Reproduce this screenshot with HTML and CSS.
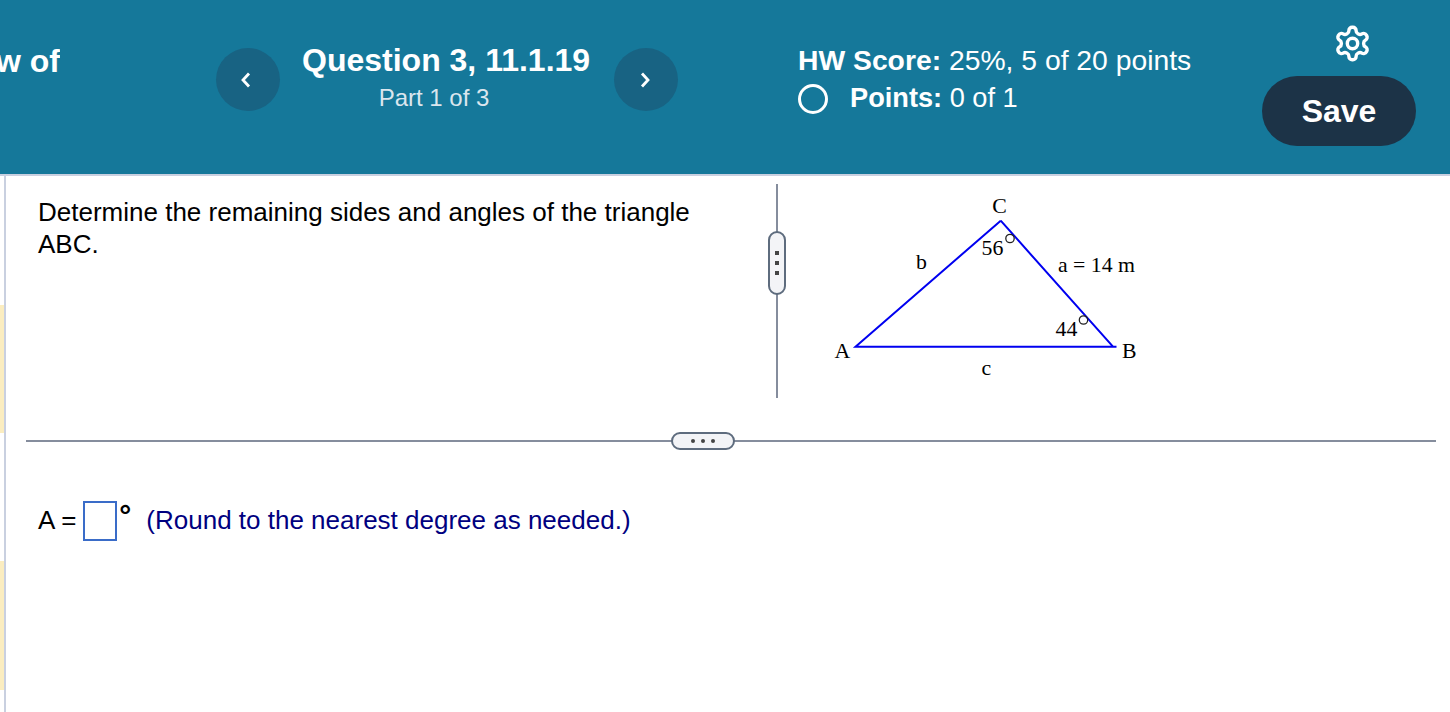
FILE: index.html
```html
<!DOCTYPE html>
<html lang="en">
<head>
<meta charset="utf-8">
<title>Question 3, 11.1.19</title>
<link rel="stylesheet" href="styles.css">
</head>
<body>
<header class="header">
  <div class="clip"><span>Review of</span></div>
  <button class="nav nav-prev" aria-label="Previous question">
    <svg width="12" height="18" viewBox="0 0 12 18"><path d="M9 2.5 L3 9 L9 15.5" class="chev"/></svg>
  </button>
  <div class="title">
    <div class="title-main">Question 3, 11.1.19</div>
    <div class="title-part">Part 1 of 3</div>
  </div>
  <button class="nav nav-next" aria-label="Next question">
    <svg width="12" height="18" viewBox="0 0 12 18"><path d="M3 2.5 L9 9 L3 15.5" class="chev"/></svg>
  </button>
  <div class="score">
    <div class="score-line"><b>HW Score:</b> 25%, 5 of 20 points</div>
    <div class="score-line points"><span class="ring"></span><span><b>Points:</b> 0 of 1</span></div>
  </div>
  <div class="actions">
    <svg class="gear" width="39" height="39" viewBox="0 0 24 24"><path d="M12.22 2h-.44a2 2 0 0 0-2 2v.18a2 2 0 0 1-1 1.73l-.43.25a2 2 0 0 1-2 0l-.15-.08a2 2 0 0 0-2.73.73l-.22.38a2 2 0 0 0 .73 2.73l.15.1a2 2 0 0 1 1 1.72v.51a2 2 0 0 1-1 1.74l-.15.09a2 2 0 0 0-.73 2.73l.22.38a2 2 0 0 0 2.73.73l.15-.08a2 2 0 0 1 2 0l.43.25a2 2 0 0 1 1 1.73V20a2 2 0 0 0 2 2h.44a2 2 0 0 0 2-2v-.18a2 2 0 0 1 1-1.73l.43-.25a2 2 0 0 1 2 0l.15.08a2 2 0 0 0 2.73-.73l.22-.39a2 2 0 0 0-.73-2.73l-.15-.08a2 2 0 0 1-1-1.74v-.5a2 2 0 0 1 1-1.74l.15-.09a2 2 0 0 0 .73-2.73l-.22-.38a2 2 0 0 0-2.73-.73l-.15.08a2 2 0 0 1-2 0l-.43-.25a2 2 0 0 1-1-1.73V4a2 2 0 0 0-2-2z"/><circle cx="12" cy="12" r="3.2"/></svg>
    <button class="save">Save</button>
  </div>
</header>
<div class="body">
  <aside class="rail">
    <div class="mark mark-a"></div>
    <div class="mark mark-b"></div>
  </aside>
  <main class="main">
    <section class="top">
      <p class="prompt">Determine the remaining sides and angles of the triangle ABC.</p>
      <div class="vsplit">
        <div class="vhandle"><i></i><i></i><i></i></div>
      </div>
      <svg class="figure" width="330" height="199" viewBox="820 186 330 199">
        <path class="tri" d="M1000.7 220.7 L855.5 346.7 H1116.5 M1000.7 220.7 L1113 346.7"/>
        <text x="999.5" y="213" text-anchor="middle">C</text>
        <text x="981.5" y="255">56</text>
        <circle class="deg" cx="1010" cy="238.5" r="4.2"/>
        <text x="916" y="269">b</text>
        <text x="1058" y="272">a = 14 m</text>
        <text x="1055.5" y="336">44</text>
        <circle class="deg" cx="1083.5" cy="320" r="4.2"/>
        <text x="834.5" y="358">A</text>
        <text x="1122" y="358">B</text>
        <text x="981.5" y="375">c</text>
      </svg>
    </section>
    <div class="hsplit"><div class="hhandle"><i></i><i></i><i></i></div></div>
    <section class="answer">
      <span class="lhs">A =</span>
      <span class="box"></span>
      <span class="degree">°</span>
      <span class="hint">(Round to the nearest degree as needed.)</span>
    </section>
  </main>
</div>
</body>
</html>
```
FILE: styles.css
```css
* { box-sizing: border-box; }
html, body { margin: 0; height: 100%; overflow: hidden; }
body {
  width: 1450px;
  height: 712px;
  background: #fff;
  color: #000;
  font-family: "Liberation Sans", Arial, sans-serif;
  display: flex;
  flex-direction: column;
}
button { font-family: inherit; border: 0; padding: 0; }

.header {
  flex: 0 0 176px;
  display: flex;
  align-items: flex-start;
  background: #15789a;
  border-bottom: 2px solid #c9d0e0;
  color: #fff;
}
.clip {
  width: 60px;
  margin-top: 42px;
  overflow: hidden;
  display: flex;
  justify-content: flex-end;
  white-space: nowrap;
  font-size: 32px;
  line-height: 38px;
  font-weight: 700;
}
.nav {
  flex: none;
  width: 64px;
  height: 63px;
  margin-top: 48px;
  border-radius: 50%;
  background: #186383;
  display: flex;
  align-items: center;
  justify-content: center;
}
.chev { fill: none; stroke: #fff; stroke-width: 2.8; }
.nav-prev { margin-left: 156px; padding-right: 4px; }
.nav-next { margin-left: 24px; padding-right: 2px; }
.title { width: 288px; margin-left: 22px; margin-top: 41px; }
.title-main { font-size: 32px; line-height: 38px; font-weight: 700; white-space: nowrap; }
.title-part {
  font-size: 24px;
  line-height: 38px;
  color: #dbe6ee;
  text-align: center;
  padding-right: 24px;
}
.score { margin-left: 120px; margin-top: 42px; font-size: 28.3px; }
.score-line { line-height: 36px; white-space: nowrap; }
.points { display: flex; align-items: center; gap: 22px; font-size: 27.2px; padding-top: 2px; }
.ring { width: 30px; height: 30px; border: 3px solid #fff; border-radius: 50%; margin-top: 2px; }
.actions {
  margin-left: auto;
  margin-right: 34px;
  margin-top: 24px;
  display: flex;
  flex-direction: column;
  align-items: center;
}
.gear { fill: none; stroke: #fff; stroke-width: 2.1; margin-left: 26px; }
.save {
  width: 154px;
  height: 70px;
  margin-top: 13px;
  border-radius: 35px;
  background: #1c3347;
  color: #fff;
  font-size: 32px;
  font-weight: 700;
}

.body { flex: 1; display: flex; min-height: 0; }
.rail { flex: 0 0 6px; border-right: 2px solid #c9d0e0; }
.mark { background: #fbedc0; height: 128px; }
.mark-a { margin-top: 129px; }
.mark-b { margin-top: 128px; height: 129px; }
.main { flex: 1; min-width: 0; }

.top { height: 264px; display: flex; align-items: flex-start; }
.prompt {
  width: 662px;
  margin: 20px 0 0 32px;
  font-size: 26px;
  line-height: 32px;
}
.vsplit {
  position: relative;
  width: 2px;
  height: 214px;
  margin: 8px 0 0 76px;
  background: #858d9d;
}
.vhandle {
  position: absolute;
  left: -8px;
  top: 47px;
  width: 18px;
  height: 64px;
  border: 2px solid #5e6c7e;
  border-radius: 9px;
  background: #f3f4f7;
  display: flex;
  flex-direction: column;
  align-items: center;
  justify-content: center;
  gap: 6px;
}
.vhandle i { width: 4px; height: 4px; background: #444; }
.figure { flex: none; margin: 10px 0 0 42px; }
.figure text { font-family: "Liberation Serif", "Times New Roman", serif; font-size: 21.8px; fill: #000; }
.tri { fill: none; stroke: #0000f0; stroke-width: 2; }
.deg { fill: none; stroke: #222; stroke-width: 1.3; }

.hsplit {
  position: relative;
  height: 2px;
  margin-left: 20px;
  margin-right: 14px;
  background: #858d9d;
}
.hhandle {
  position: absolute;
  left: 645px;
  top: -8px;
  width: 64px;
  height: 18px;
  border: 2px solid #5e6c7e;
  border-radius: 9px;
  background: #f3f4f7;
  display: flex;
  align-items: center;
  justify-content: center;
  gap: 6px;
}
.hhandle i { width: 4px; height: 4px; border-radius: 50%; background: #444; }

.answer {
  display: flex;
  align-items: flex-start;
  margin: 59px 0 0 32px;
  font-size: 26px;
  line-height: 38px;
}
.box {
  width: 34px;
  height: 40px;
  margin-left: 7px;
  border: 2px solid #3a6cc8;
}
.degree { width: 29px; padding-left: 2px; font-size: 30px; font-weight: 700; line-height: 30px; }
.hint { color: #000080; }
```
